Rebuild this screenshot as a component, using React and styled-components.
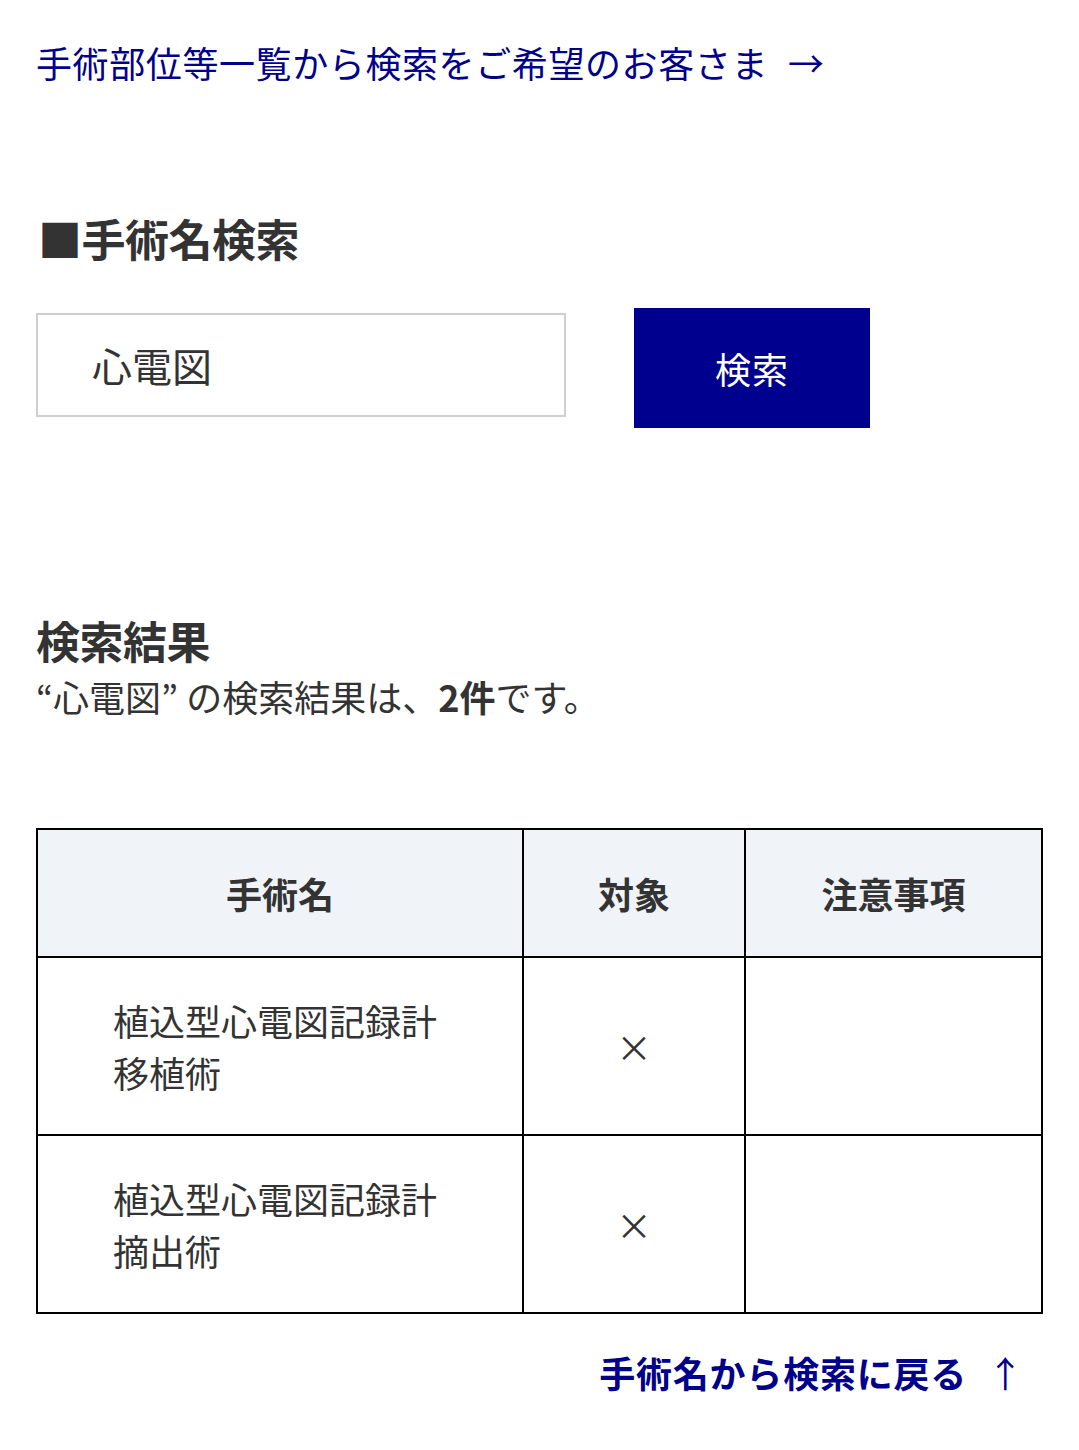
import React from "react";
import styled, { createGlobalStyle } from "styled-components";

const GlobalStyle = createGlobalStyle`
  html, body {
    margin: 0;
    padding: 0;
    background: #fff;
  }
  body {
    font-family: "Noto Sans CJK JP", "Noto Sans", sans-serif;
    color: #333;
  }
`;

const Page = styled.div`
  width: 1079px;
  box-sizing: border-box;
  padding: 35px 37px 40px 36px;
  display: flex;
  flex-direction: column;
`;

const TopLink = styled.a`
  font-size: 36px;
  line-height: 54px;
  color: #00008b;
  text-decoration: none;
  letter-spacing: 0.6px;
  span {
    margin-left: 20px;
  }
`;

const SectionTitle = styled.h2`
  margin: 119px 0 0 2px;
  font-size: 44px;
  line-height: 60px;
  font-weight: 700;
  color: #333;
  letter-spacing: -0.5px;
`;

const SearchRow = styled.form`
  display: flex;
  align-items: center;
  gap: 68px;
  margin: 34px 0 0 0;
`;

const SearchInput = styled.div`
  width: 530px;
  height: 104px;
  box-sizing: border-box;
  border: 2px solid #cfcfcf;
  display: flex;
  align-items: center;
  padding-left: 54px;
  font-size: 40px;
  color: #333;
`;

const SearchButton = styled.button`
  width: 236px;
  height: 120px;
  margin-top: 6px;
  background: #00008f;
  color: #fff;
  border: none;
  font-family: inherit;
  font-size: 36px;
  letter-spacing: 1px;
`;

const ResultTitle = styled.h3`
  margin: 184px 0 0 0;
  font-size: 44px;
  line-height: 56px;
  font-weight: 700;
  color: #333;
  letter-spacing: -0.5px;
`;

const ResultText = styled.p`
  margin: 0;
  font-size: 36px;
  line-height: 56px;
  color: #333;
  strong {
    font-weight: 700;
  }
`;

const Table = styled.table`
  margin-top: 104px;
  width: 1004px;
  border-collapse: collapse;
  table-layout: fixed;
  border: 2px solid #000;
`;

const Th = styled.th`
  width: ${({ w }) => w}px;
  height: 126px;
  background: #f0f4f8;
  border: 2px solid #000;
  font-size: 36px;
  font-weight: 700;
  color: #333;
  text-align: center;
  padding: 0;
`;

const Td = styled.td`
  height: 176px;
  border: 2px solid #000;
  font-size: 36px;
  line-height: 52px;
  color: #333;
  padding: 0 ${({ pad }) => pad || 0}px 0 ${({ pad }) => pad || 0}px;
  text-align: ${({ center }) => (center ? "center" : "left")};
  vertical-align: middle;
`;

const BackLink = styled.a`
  align-self: flex-end;
  margin: 26px 18px 0 0;
  font-size: 36px;
  line-height: 64px;
  font-weight: 700;
  color: #00008b;
  text-decoration: none;
  letter-spacing: 0.8px;
  span {
    margin-left: 20px;
    font-weight: 400;
  }
`;

const rows = [
  { name: ["植込型心電図記録計", "移植術"], target: "×" },
  { name: ["植込型心電図記録計", "摘出術"], target: "×" },
];

export default function App() {
  return (
    <>
      <GlobalStyle />
      <Page>
        <TopLink href="#">
          手術部位等一覧から検索をご希望のお客さま<span>→</span>
        </TopLink>

        <SectionTitle>■手術名検索</SectionTitle>
        <SearchRow>
          <SearchInput>心電図</SearchInput>
          <SearchButton type="button">検索</SearchButton>
        </SearchRow>

        <ResultTitle>検索結果</ResultTitle>
        <ResultText>
          “心電図” の検索結果は、<strong>2件</strong>です。
        </ResultText>

        <Table>
          <thead>
            <tr>
              <Th w={484}>手術名</Th>
              <Th w={220}>対象</Th>
              <Th w={295}>注意事項</Th>
            </tr>
          </thead>
          <tbody>
            {rows.map((r, i) => (
              <tr key={i}>
                <Td pad={75}>
                  {r.name[0]}
                  <br />
                  {r.name[1]}
                </Td>
                <Td center>{r.target}</Td>
                <Td />
              </tr>
            ))}
          </tbody>
        </Table>

        <BackLink href="#">
          手術名から検索に戻る<span>↑</span>
        </BackLink>
      </Page>
    </>
  );
}
